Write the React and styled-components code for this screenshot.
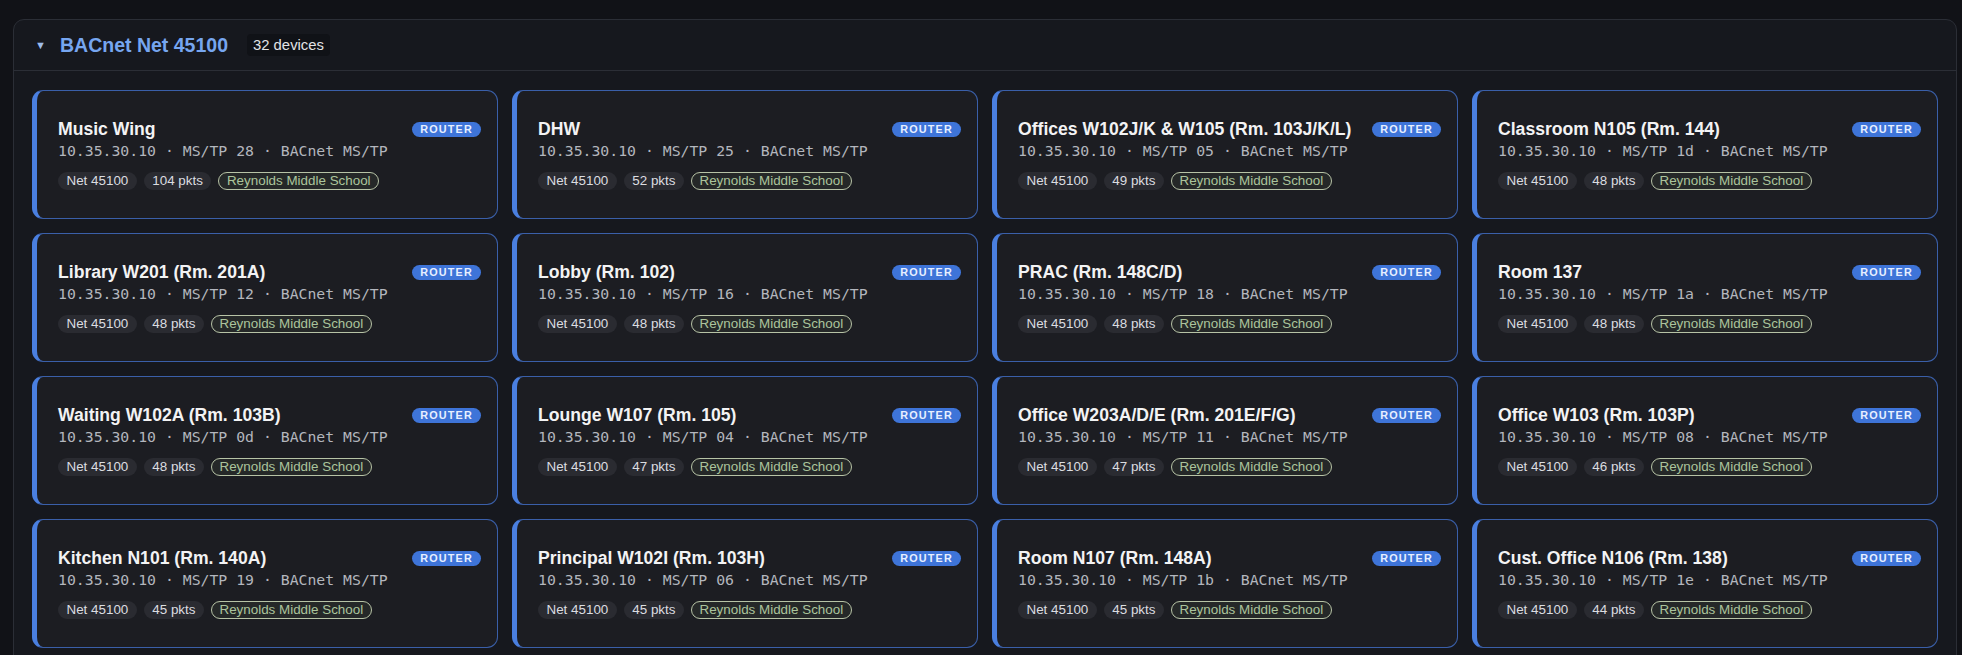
import React from 'react';
import styled, { createGlobalStyle } from 'styled-components';

const GlobalStyle = createGlobalStyle`
  html, body {
    margin: 0;
    padding: 0;
    background: #111217;
    font-family: "Liberation Sans", Arial, sans-serif;
  }
`;

const Page = styled.div`
  padding: 19px 5px 0 13px;
  min-height: 100vh;
  box-sizing: border-box;
`;

const Panel = styled.section`
  background: #16181e;
  border: 1px solid #2b2e36;
  border-radius: 11px;
`;

const PanelHeader = styled.header`
  display: flex;
  align-items: center;
  height: 50px;
  padding: 0 21px;
  border-bottom: 1px solid #2b2e36;
`;

const Caret = styled.span`
  color: #9dbbe9;
  font-size: 11px;
  width: 9px;
  margin-right: 16px;
  line-height: 1;
`;

const NetTitle = styled.h2`
  margin: 0;
  font-size: 19.5px;
  font-weight: 700;
  color: #76a6f0;
`;

const CountBadge = styled.span`
  margin-left: 19px;
  padding: 3px 6px;
  background: #101217;
  border-radius: 4px;
  color: #e2e3e6;
  font-size: 14.85px;
`;

const Grid = styled.div`
  display: grid;
  grid-template-columns: repeat(4, 1fr);
  gap: 14px;
  padding: 19px 18px;
`;

const Card = styled.article`
  box-sizing: border-box;
  height: 129px;
  padding: 28px 16px 28px 21px;
  background: #1c1d22;
  border: 1px solid #3a5fa9;
  border-left: 5px solid #4a7fe0;
  border-radius: 11px;
  display: flex;
  flex-direction: column;
`;

const TopRow = styled.div`
  display: flex;
  justify-content: space-between;
  align-items: flex-start;
`;

const DeviceName = styled.div`
  font-size: 17.6px;
  line-height: 21px;
  font-weight: 700;
  color: #f3f3f4;
  white-space: nowrap;
`;

const RouterBadge = styled.span`
  margin-top: 3px;
  height: 15px;
  padding: 0 8px;
  border-radius: 8px;
  background: #3e74d8;
  color: #e8efff;
  font-size: 10.8px;
  font-weight: 700;
  letter-spacing: 1.2px;
  line-height: 15px;
`;

const AddrLine = styled.div`
  margin-top: 2px;
  font-family: "DejaVu Sans Mono", "Liberation Mono", monospace;
  font-size: 14.8px;
  line-height: 18px;
  color: #b3b6bd;
  white-space: nowrap;
`;

const ChipRow = styled.div`
  display: flex;
  gap: 7px;
  margin-top: 12px;
`;

const Chip = styled.span`
  height: 18px;
  box-sizing: border-box;
  padding: 0 7.5px;
  border-radius: 9px;
  font-size: 13.4px;
  line-height: 16px;
  white-space: nowrap;
  border: 1px solid ${p => (p.site ? '#b7c3a6' : 'transparent')};
  background: ${p => (p.site ? 'rgba(150, 180, 120, 0.08)' : '#2a2b31')};
  color: ${p => (p.site ? '#abc49c' : '#dcdde0')};
`;

const devices = [
  ['Music Wing', '28', 104],
  ['DHW', '25', 52],
  ['Offices W102J/K & W105 (Rm. 103J/K/L)', '05', 49],
  ['Classroom N105 (Rm. 144)', '1d', 48],
  ['Library W201 (Rm. 201A)', '12', 48],
  ['Lobby (Rm. 102)', '16', 48],
  ['PRAC (Rm. 148C/D)', '18', 48],
  ['Room 137', '1a', 48],
  ['Waiting W102A (Rm. 103B)', '0d', 48],
  ['Lounge W107 (Rm. 105)', '04', 47],
  ['Office W203A/D/E (Rm. 201E/F/G)', '11', 47],
  ['Office W103 (Rm. 103P)', '08', 46],
  ['Kitchen N101 (Rm. 140A)', '19', 45],
  ['Principal W102I (Rm. 103H)', '06', 45],
  ['Room N107 (Rm. 148A)', '1b', 45],
  ['Cust. Office N106 (Rm. 138)', '1e', 44],
];

const App = () => (
  <>
    <GlobalStyle />
    <Page>
      <Panel>
        <PanelHeader>
          <Caret>▼</Caret>
          <NetTitle>BACnet Net 45100</NetTitle>
          <CountBadge>32 devices</CountBadge>
        </PanelHeader>
        <Grid>
          {devices.map(([name, mac, pkts]) => (
            <Card key={name}>
              <TopRow>
                <DeviceName>{name}</DeviceName>
                <RouterBadge>ROUTER</RouterBadge>
              </TopRow>
              <AddrLine>10.35.30.10 · MS/TP {mac} · BACnet MS/TP</AddrLine>
              <ChipRow>
                <Chip>Net 45100</Chip>
                <Chip>{pkts} pkts</Chip>
                <Chip site>Reynolds Middle School</Chip>
              </ChipRow>
            </Card>
          ))}
        </Grid>
      </Panel>
    </Page>
  </>
);

export default App;
